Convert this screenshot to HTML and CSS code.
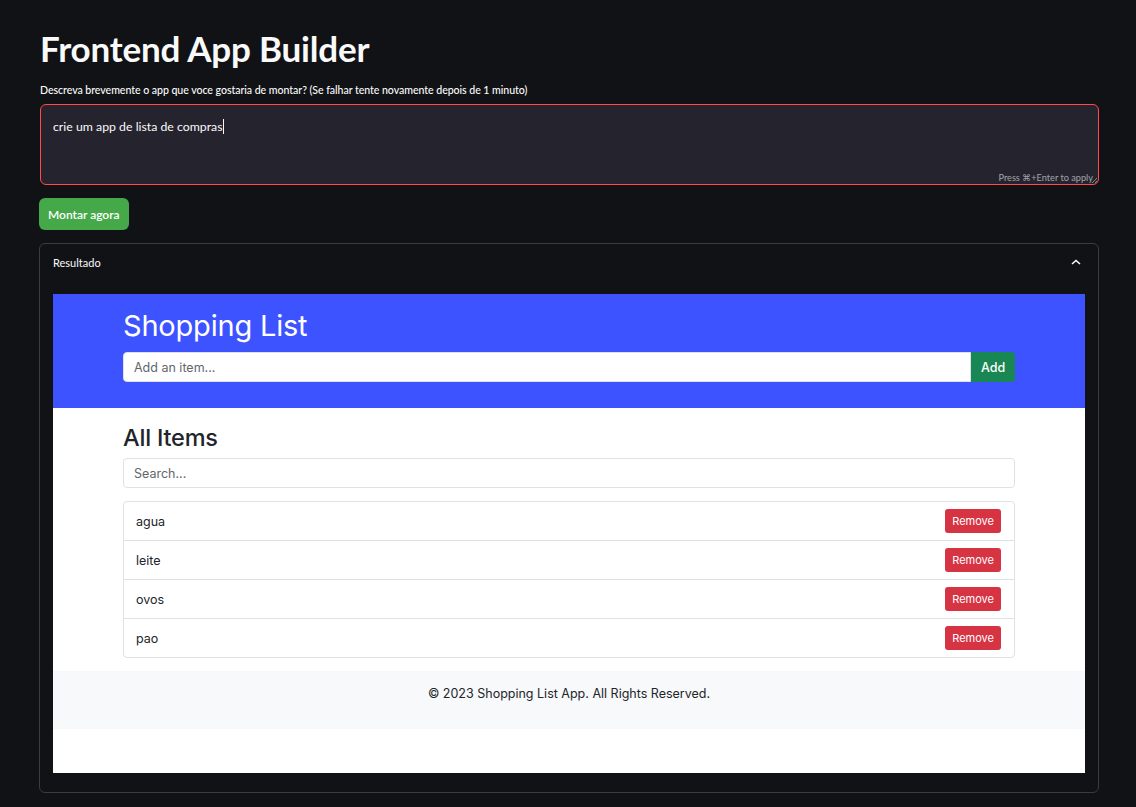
FILE: index.html
```html
<!DOCTYPE html>
<html lang="pt">
<head>
<meta charset="utf-8">
<title>Frontend App Builder</title>
<link rel="stylesheet" href="styles.css">
</head>
<body>
<main class="main">
  <h1 class="title">Frontend App Builder</h1>
  <label class="label">Descreva brevemente o app que voce gostaria de montar? (Se falhar tente novamente depois de 1 minuto)</label>
  <div class="textarea">
    <div class="ta-text">crie um app de lista de compras<span class="caret"></span></div>
    <div class="ta-hint">Press ⌘+Enter to apply</div>
    <svg class="resize" width="6" height="6" viewBox="0 0 6 6"><path d="M1 6L6 1M4 6L6 4" stroke="#9a9aa0" stroke-width="0.8"/></svg>
  </div>
  <button class="btn-primary">Montar agora</button>
  <section class="expander">
    <div class="exp-head">
      <span>Resultado</span>
      <svg width="10" height="6" viewBox="0 0 10 6"><path d="M1 5L5 1.5L9 5" fill="none" stroke="#fafafa" stroke-width="1.6"/></svg>
    </div>
    <div class="frame">
      <header class="app-header">
        <div class="container">
          <h1 class="app-title">Shopping List</h1>
          <div class="input-group">
            <div class="input add-input">Add an item...</div>
            <button class="btn-add">Add</button>
          </div>
        </div>
      </header>
      <section class="app-body">
        <div class="container">
          <h2 class="app-h2">All Items</h2>
          <div class="input search">Search...</div>
          <ul class="list">
            <li class="item"><span>agua</span><button class="btn-remove">Remove</button></li>
            <li class="item"><span>leite</span><button class="btn-remove">Remove</button></li>
            <li class="item"><span>ovos</span><button class="btn-remove">Remove</button></li>
            <li class="item"><span>pao</span><button class="btn-remove">Remove</button></li>
          </ul>
        </div>
      </section>
      <footer class="app-footer">© 2023 Shopping List App. All Rights Reserved.</footer>
    </div>
  </section>
</main>
</body>
</html>
```
FILE: styles.css
```css
* { box-sizing: border-box; }
html, body { margin: 0; padding: 0; }
body {
  background: #111216;
  color: #fafafa;
  font-family: "Lato", "Open Sans", sans-serif;
}
.main {
  padding: 26px 37px 0 39px;
}
.title {
  margin: 0 0 0 1px;
  font-size: 35px;
  font-weight: 700;
  line-height: 44px;
  letter-spacing: -0.2px;
}
.label {
  display: block;
  margin: 13px 0 7px 1px;
  font-size: 10.6px;
  font-weight: 500;
  line-height: 14px;
  letter-spacing: -0.05px;
}
.textarea {
  position: relative;
  margin-left: 1px;
  height: 81px;
  background: #25242e;
  border: 1px solid #ff4b4b;
  border-radius: 6px;
  padding: 14px 12px;
}
.ta-text {
  font-size: 12.3px;
  line-height: 16px;
}
.caret {
  display: inline-block;
  width: 1px;
  height: 15px;
  background: #fafafa;
  vertical-align: -3px;
}
.ta-hint {
  position: absolute;
  right: 5px;
  bottom: 1px;
  font-size: 9.2px;
  color: #a3a3ab;
}
.resize {
  position: absolute;
  right: 1px;
  bottom: 1px;
}
.btn-primary {
  display: block;
  margin: 13px 0 13px 0;
  height: 32px;
  padding: 0 9px;
  background: #45a94a;
  color: #fff;
  border: none;
  border-radius: 6px;
  font-family: inherit;
  font-size: 12px;
  font-weight: 600;
}
.expander {
  border: 1px solid #3b3c43;
  border-radius: 6px;
  padding: 0 13px 19px 13px;
}
.exp-head {
  display: flex;
  justify-content: space-between;
  align-items: center;
  height: 37px;
  padding-bottom: 1px;
  font-size: 11px;
  padding-right: 4px;
}
.frame {
  margin-top: 13px;
  background: #fff;
  height: 479px;
  font-family: "Inter", "Roboto", sans-serif;
  color: #212529;
}
.container {
  width: 892px;
  margin: 0 auto;
}
.app-header {
  background: #3c53ff;
  padding: 14px 0 26px;
}
.app-title {
  margin: 0 0 8px;
  font-size: 29px;
  font-weight: 400;
  line-height: 36px;
  color: #fff;
  letter-spacing: -0.2px;
}
.input-group {
  display: flex;
  height: 30px;
}
.input {
  background: #fff;
  border: 1px solid #dee2e6;
  border-radius: 4px;
  height: 30px;
  padding: 0 10px;
  display: flex;
  align-items: center;
  font-size: 12.5px;
  color: #62666b;
}
.add-input {
  flex: 1;
  border-radius: 4px 0 0 4px;
}
.btn-add {
  width: 44px;
  background: #198754;
  color: #fff;
  border: none;
  border-radius: 0 4px 4px 0;
  font-family: inherit;
  font-size: 12.5px;
  font-weight: 500;
}
.app-body {
  padding: 16px 0 13px;
}
.app-h2 {
  margin: 0 0 6px;
  font-size: 23.5px;
  font-weight: 500;
  line-height: 28px;
  letter-spacing: -0.2px;
}
.search { margin-bottom: 13px; }
.list {
  list-style: none;
  margin: 0;
  padding: 0;
  border: 1px solid #dee2e6;
  border-radius: 4px;
}
.item {
  display: flex;
  justify-content: space-between;
  align-items: center;
  height: 39px;
  padding: 0 13px 0 12px;
  font-size: 12.5px;
  border-top: 1px solid #dee2e6;
}
.item:first-child { border-top: none; height: 38px; }
.btn-remove {
  height: 24px;
  padding: 0 7px;
  background: #d63343;
  color: #fff;
  border: none;
  border-radius: 3px;
  font-family: inherit;
  font-size: 11px;
}
.app-footer {
  background: #f8f9fa;
  height: 58px;
  padding-top: 15px;
  text-align: center;
  font-size: 12.5px;
  line-height: 16px;
}
```
